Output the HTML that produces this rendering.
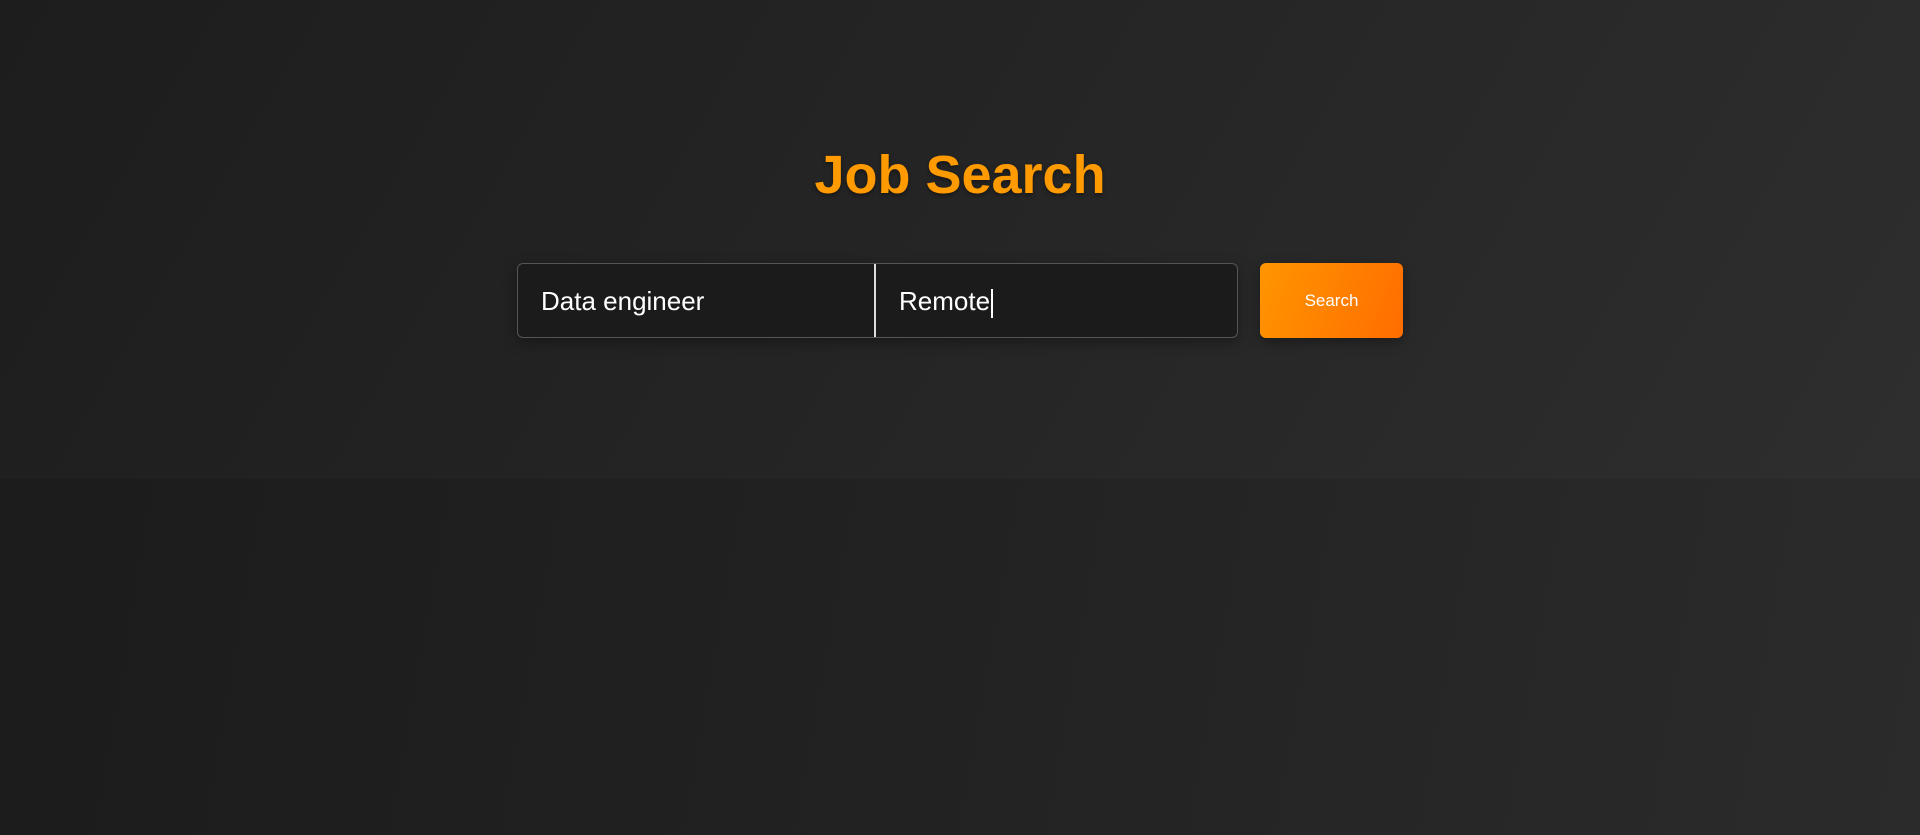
<!DOCTYPE html>
<html><head><meta charset="utf-8"><style>
html,body{margin:0;padding:0;width:1920px;height:835px;overflow:hidden;}
body{background:linear-gradient(100deg,#1b1b1b 0%,#222 50%,#2b2b2b 100%);font-family:"Liberation Sans",Arial,sans-serif;position:relative;}
.hdr{position:absolute;left:0;top:0;width:1920px;height:479px;background:linear-gradient(120deg,#1d1d1d 0%,#252525 50%,#2e2e2e 100%);}
h1{position:absolute;left:0;width:1920px;top:143px;margin:0;text-align:center;font-size:54px;font-weight:bold;color:#ff9a00;text-shadow:0 2px 4px rgba(0,0,0,.4);line-height:64px;}
.box{position:absolute;left:517px;top:263px;width:719px;height:73px;border:1.5px solid #555;border-radius:6px;background:#1b1b1b;box-shadow:0 4px 14px rgba(0,0,0,.35);}
.div{position:absolute;left:356px;top:0;width:2px;height:73px;background:#ddd;}
.t{position:absolute;top:1px;line-height:73px;font-size:26px;color:#fff;}
.caret{display:inline-block;width:1.5px;height:29px;background:#fff;vertical-align:middle;margin-left:1px;}
.btn{position:absolute;left:1260px;top:263px;width:143px;height:75px;border-radius:6px;background:linear-gradient(110deg,#ff9500,#ff6d00);color:#fff;font-size:17px;text-align:center;line-height:75px;box-shadow:0 4px 12px rgba(0,0,0,.35);}
</style></head><body>
<div class="hdr"></div>
<h1>Job Search</h1>
<div class="box">
<div class="t" style="left:23px">Data engineer</div>
<div class="div"></div>
<div class="t" style="left:381px">Remote<span class="caret"></span></div>
</div>
<div class="btn">Search</div>
</body></html>
